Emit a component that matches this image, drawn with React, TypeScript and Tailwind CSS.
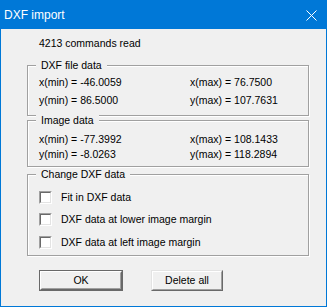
// DXF import dialog — Windows classic look

const font = { fontFamily: '"Liberation Sans", Arial, sans-serif' };

function Group({ label, className, children }: { label: string; className?: string; children: React.ReactNode }) {
  return (
    <div className={`relative w-[282px] border border-[#a0a0a0] shadow-[inset_1px_1px_0_#fff,1px_1px_0_#fff] ${className ?? ''}`}>
      <span className="absolute -top-[7px] left-[8px] px-[5px] bg-[#f0f0f0] leading-[13px]">{label}</span>
      {children}
    </div>
  );
}

function Row({ left, right, h }: { left: string; right: string; h: string }) {
  return (
    <div className={`flex ${h}`}>
      <span className="w-[151px]">{left}</span>
      <span>{right}</span>
    </div>
  );
}

function Check({ label, className }: { label: string; className?: string }) {
  return (
    <div className={`flex items-center h-[13px] ${className ?? ''}`}>
      <span className="block w-[13px] h-[13px] border border-t-[#a0a0a0] border-l-[#a0a0a0] border-b-white border-r-white">
        <span className="block w-full h-full bg-white border border-t-[#696969] border-l-[#696969] border-b-[#e3e3e3] border-r-[#e3e3e3]" />
      </span>
      <span className="ml-[9px] leading-[13px]">{label}</span>
    </div>
  );
}

export default function App() {
  return (
    <div
      className="w-[327px] h-[307px] border border-[#0078d7] bg-[#f0f0f0] flex flex-col text-[10.5px] text-black"
      style={font}
    >
      <div className="h-[28px] bg-[#0078d7] flex items-center justify-between shrink-0">
        <span className="pl-[3px] text-white text-[12px] leading-none">DXF import</span>
        <svg width="11" height="11" viewBox="0 0 11 11" className="mr-[9px]">
          <path d="M0.5 0.5 L10.5 10.5 M10.5 0.5 L0.5 10.5" stroke="#fff" strokeWidth="1" fill="none" />
        </svg>
      </div>

      <div className="flex flex-col pl-[26px] pt-[8px]">
        <div className="ml-[12px] leading-[13px]">4213 commands read</div>

        <Group label="DXF file data" className="mt-[15px] pl-[11px] pt-[7px] pb-[6px]">
          <Row left="x(min) = -46.0059" right="x(max) = 76.7500" h="h-[18px] leading-[18px]" />
          <Row left="y(min) = 86.5000" right="y(max) = 107.7631" h="h-[18px] leading-[18px]" />
        </Group>

        <Group label="Image data" className="mt-[4px] pl-[11px] pt-[11px] pb-[4px]">
          <Row left="x(min) = -77.3992" right="x(max) = 108.1433" h="h-[15px] leading-[15px]" />
          <Row left="y(min) = -8.0263" right="y(max) = 118.2894" h="h-[15px] leading-[15px]" />
        </Group>

        <Group label="Change DXF data" className="mt-[7px] pl-[11px] pt-[16px] pb-[6px]">
          <Check label="Fit in DXF data" />
          <Check label="DXF data at lower image margin" className="mt-[9px]" />
          <Check label="DXF data at left image margin" className="mt-[10px]" />
        </Group>

        <div className="flex mt-[14px] ml-[12px] gap-[28px]">
          <button className="w-[84px] h-[21px] border border-[#696969] p-0 bg-[#f0f0f0]">
            <span className="flex w-full h-full border border-t-white border-l-white border-b-[#696969] border-r-[#696969]">
              <span className="flex w-full h-full items-center justify-center border border-t-transparent border-l-transparent border-b-[#a0a0a0] border-r-[#a0a0a0] leading-none">
                OK
              </span>
            </span>
          </button>
          <button className="w-[72px] h-[21px] p-0 bg-[#f0f0f0] border border-t-[#e3e3e3] border-l-[#e3e3e3] border-b-[#696969] border-r-[#696969]">
            <span className="flex w-full h-full items-center justify-center border border-t-white border-l-white border-b-[#a0a0a0] border-r-[#a0a0a0] leading-none">
              Delete all
            </span>
          </button>
        </div>
      </div>
    </div>
  );
}
